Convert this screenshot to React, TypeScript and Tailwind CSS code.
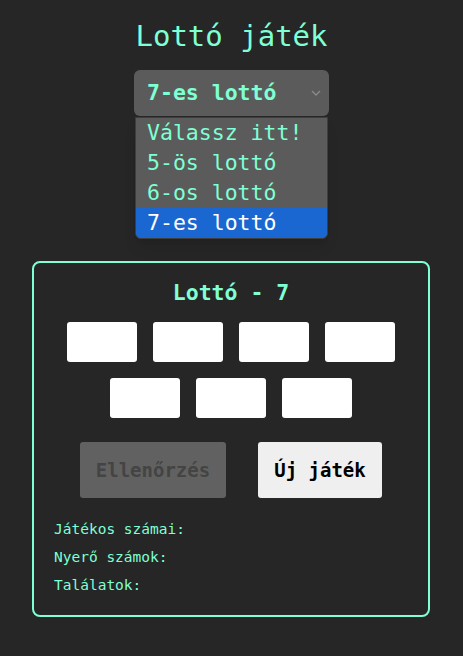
const inputs = [1, 2, 3, 4, 5, 6, 7];
const options = ["Válassz itt!", "5-ös lottó", "6-os lottó", "7-es lottó"];

export default function App() {
  return (
    <div className="min-h-screen bg-[#262626] flex flex-col items-center pt-[16px] font-['DejaVu_Sans_Mono',monospace] text-[#7fffd4]">
      <h1 className="text-[29px] leading-[40px]">Lottó játék</h1>

      {/* lenyitott választó */}
      <div className="relative mt-[14px] w-[195px]">
        <div className="h-[46px] bg-[#5b5b5b] rounded-md flex items-center justify-between pl-[13px] pr-[8px]">
          <span className="text-[21.5px] font-bold">7-es lottó</span>
          <svg width="10" height="6" viewBox="0 0 10 6" fill="none" stroke="#8a8a8a" strokeWidth="1.3">
            <path d="M1 1l4 4 4-4" />
          </svg>
        </div>
        <ul className="absolute top-[47px] left-[1px] w-[193px] bg-[#5b5b5b] rounded-b-md border border-[#3e3e3e] shadow-lg overflow-hidden">
          {options.map((o) => (
            <li
              key={o}
              className={`h-[30px] pl-[11px] flex items-center text-[21.5px] ${
                o === "7-es lottó" ? "bg-[#1a67d2] text-white" : ""
              }`}
            >
              {o}
            </li>
          ))}
        </ul>
      </div>

      <div className="mt-[145px] mr-[1px] w-[398px] border-2 border-[#7fffd4] rounded-lg pt-[14px] pb-[16px]">
        <h2 className="text-center text-[21.5px] leading-[32px] font-bold">Lottó - 7</h2>
        <div className="mt-[13px] px-[20px] flex flex-wrap justify-center gap-4">
          {inputs.map((i) => (
            <input key={i} className="w-[70px] h-[40px] bg-white rounded-[3px] outline-none" />
          ))}
        </div>
        <div className="mt-[24px] flex justify-center gap-8">
          <button className="w-[146px] h-[56px] bg-[#616161] text-[#444] rounded-[3px] text-[19px] font-bold">
            Ellenőrzés
          </button>
          <button className="w-[124px] h-[56px] bg-[#efefef] text-black rounded-[3px] text-[19px] font-bold">
            Új játék
          </button>
        </div>
        <div className="mt-[17px] pl-[20px] text-[14.5px] leading-[28px]">
          <p>Játékos számai:</p>
          <p>Nyerő számok:</p>
          <p>Találatok:</p>
        </div>
      </div>
    </div>
  );
}
